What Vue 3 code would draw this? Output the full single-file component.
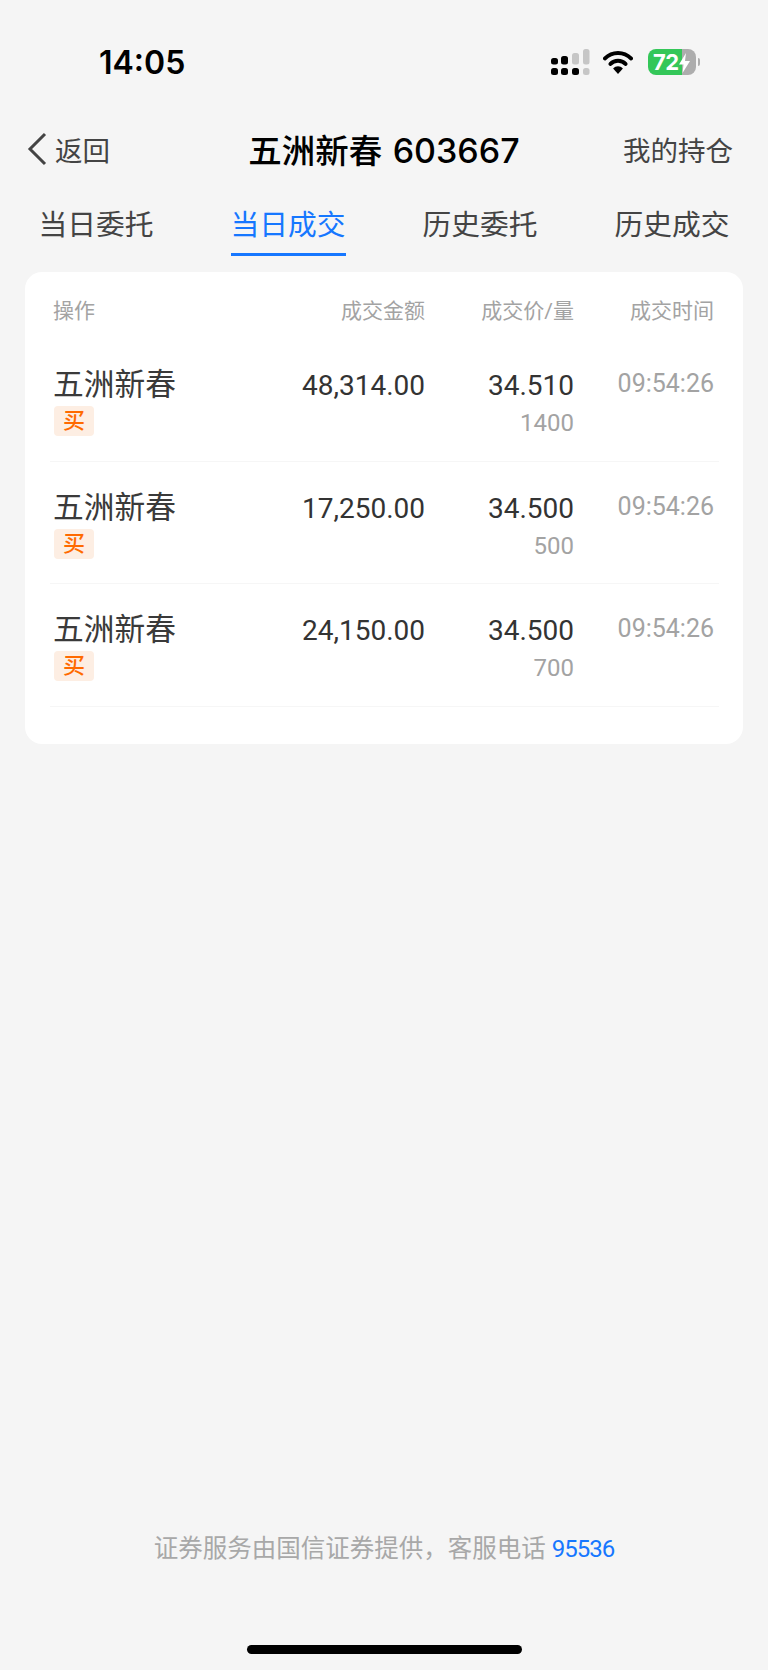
<template>
  <div class="page">
    <div class="status-bar">
      <span class="time">14:05</span>
      <div class="status-icons">
        <svg class="signal" width="39" height="26" viewBox="0 0 39 26">
          <rect x="0" y="9" width="7" height="6.5" rx="2.5" fill="#000" />
          <rect x="10" y="7" width="7" height="8.5" rx="2.5" fill="#000" />
          <rect x="21" y="4" width="7" height="11.5" rx="2.5" fill="#c6c6c6" />
          <rect x="32" y="0" width="6.5" height="15.5" rx="2.5" fill="#c6c6c6" />
          <rect x="0" y="19" width="7" height="7" rx="2.5" fill="#000" />
          <rect x="10" y="19" width="7" height="7" rx="2.5" fill="#000" />
          <rect x="21" y="19" width="7" height="7" rx="2.5" fill="#000" />
          <rect x="32" y="19" width="6.5" height="7" rx="2.5" fill="#c6c6c6" />
        </svg>
        <svg class="wifi" width="30" height="24" viewBox="0 0 32 24" preserveAspectRatio="none">
          <path d="M2 8.5C9.8 1.2 22.2 1.2 30 8.5" fill="none" stroke="#000" stroke-width="4" stroke-linecap="round" />
          <path d="M7.8 14C12.4 9.8 19.6 9.8 24.2 14" fill="none" stroke="#000" stroke-width="4" stroke-linecap="round" />
          <path d="M10.8 18.6C13.8 15.4 18.2 15.4 21.2 18.6L16 24Z" fill="#000" />
        </svg>
        <div class="battery">
          <div class="battery-body">
            <span class="battery-num">72</span>
            <svg class="bolt" width="11" height="20" viewBox="0 0 11 20">
              <path d="M7 0L0 11.5H4.5L3.5 20L11 8H6Z" fill="#fff" />
            </svg>
          </div>
          <span class="battery-nub"></span>
        </div>
      </div>
    </div>

    <div class="nav-bar">
      <div class="back">
        <svg width="20" height="34" viewBox="0 0 20 34">
          <path d="M18 2L3 17L18 32" fill="none" stroke="#444" stroke-width="3" />
        </svg>
        <span>返回</span>
      </div>
      <div class="title">五洲新春 <span class="code">603667</span></div>
      <div class="holdings">我的持仓</div>
    </div>

    <div class="tabs">
      <div v-for="tab in tabs" :key="tab" class="tab">
        <span :class="['tab-label', { active: tab === activeTab }]">{{ tab }}</span>
      </div>
    </div>

    <div class="card">
      <div class="table-head">
        <span class="left">操作</span>
        <span>成交金额</span>
        <span>成交价/量</span>
        <span>成交时间</span>
      </div>
      <div v-for="row in rows" :key="row.amount" class="row">
        <div class="left">
          <div class="name">五洲新春</div>
          <div class="tag">买</div>
        </div>
        <div class="amount">{{ row.amount }}</div>
        <div>
          <div class="amount">{{ row.price }}</div>
          <div class="qty">{{ row.qty }}</div>
        </div>
        <div class="deal-time">09:54:26</div>
      </div>
    </div>

    <div class="footer">证券服务由国信证券提供，客服电话 <span class="phone">95536</span></div>
    <div class="home-bar"></div>
  </div>
</template>

<script setup>
const tabs = ['当日委托', '当日成交', '历史委托', '历史成交']
const activeTab = '当日成交'

const rows = [
  { amount: '48,314.00', price: '34.510', qty: '1400' },
  { amount: '17,250.00', price: '34.500', qty: '500' },
  { amount: '24,150.00', price: '34.500', qty: '700' }
]
</script>

<style>
body {
  background: #f5f5f5;
}
</style>

<style scoped>
.page {
  width: 768px;
  height: 1670px;
  display: flex;
  flex-direction: column;
  background: #f5f5f5;
  font-family: Roboto, "Noto Sans CJK SC", sans-serif;
  color: #333;
  overflow: hidden;
}

.status-bar {
  height: 113px;
  box-sizing: border-box;
  padding: 49px 68px 0 99px;
  display: flex;
  justify-content: space-between;
  align-items: flex-start;
}

.time {
  font-family: Inter, sans-serif;
  font-size: 32px;
  font-weight: 600;
  line-height: 28px;
  color: #000;
}

.status-icons {
  display: flex;
  align-items: center;
  height: 26px;
}

.wifi {
  margin: 0 15.5px 0 13px;
}

.battery {
  display: flex;
  align-items: center;
  gap: 2px;
}

.battery-body {
  position: relative;
  width: 48px;
  height: 26px;
  border-radius: 8px;
  background: linear-gradient(to right, #34c759 0, #34c759 34px, #adadad 34px);
  display: flex;
  align-items: center;
}

.battery-num {
  margin-left: 5px;
  font-family: Inter, sans-serif;
  font-size: 22px;
  font-weight: 700;
  line-height: 26px;
  letter-spacing: -0.5px;
  color: #fff;
}

.bolt {
  position: absolute;
  left: 31px;
  top: 4px;
}

.battery-nub {
  width: 2px;
  height: 8px;
  border-radius: 0 2px 2px 0;
  background: #adadad;
}

.nav-bar {
  height: 72px;
  display: grid;
  grid-template-columns: 1fr auto 1fr;
  align-items: center;
  padding: 0 27px;
}

.back {
  display: flex;
  align-items: center;
  gap: 8px;
  font-size: 27.5px;
  color: #444;
}

.title {
  margin-bottom: 2px;
  font-size: 33.5px;
  font-weight: 500;
  color: #000;
}

.code {
  margin-left: 2px;
  font-family: Inter, sans-serif;
  font-size: 34px;
  font-weight: 500;
}

.holdings {
  margin-right: 8px;
  text-align: right;
  font-size: 27.5px;
  color: #444;
}

.tabs {
  display: grid;
  grid-template-columns: repeat(4, 1fr);
  height: 71px;
  font-size: 28.75px;
  color: #444;
  text-align: center;
}

.tab-label {
  display: inline-block;
  height: 68px;
  line-height: 80px;
}

.tab-label.active {
  color: #1677ff;
  border-bottom: 3px solid #1677ff;
}

.card {
  margin: 16px 25px 0;
  height: 472px;
  box-sizing: border-box;
  padding: 0 24px 0 25px;
  background: #fff;
  border-radius: 17px;
}

.table-head,
.row {
  display: grid;
  grid-template-columns: 176px 196px 149px 140px;
  padding: 0 5px 0 3px;
  text-align: right;
}

.table-head {
  height: 67px;
  line-height: 78px;
  font-size: 21px;
  color: #a3a3a3;
}

.left {
  text-align: left;
}

.row {
  height: 122.5px;
  box-sizing: border-box;
  padding-top: 27px;
  border-bottom: 1px solid #f6f6f6;
}

.name {
  font-size: 30.75px;
  line-height: 38px;
  color: #3a3a3a;
}

.tag {
  width: 40px;
  height: 30px;
  margin: 2px 0 0 1px;
  border-radius: 4px;
  background: #fdeee3;
  color: #ff6a00;
  font-size: 22px;
  font-weight: 500;
  line-height: 30px;
  text-align: center;
}

.amount {
  padding-top: 1px;
  font-size: 28px;
  line-height: 38px;
  color: #333;
}

.qty {
  margin-top: 1px;
  font-size: 24px;
  line-height: 34px;
  color: #a3a3a3;
}

.deal-time {
  padding-top: 2px;
  font-size: 25px;
  line-height: 32px;
  color: #a3a3a3;
}

.footer {
  margin-top: auto;
  text-align: center;
  font-size: 24.5px;
  line-height: 34px;
  color: #a8a8a8;
}

.phone {
  font-size: 24px;
  letter-spacing: -1px;
  color: #1677ff;
}

.home-bar {
  width: 275px;
  height: 9px;
  margin: 79px auto 16px;
  border-radius: 5px;
  background: #000;
}
</style>
